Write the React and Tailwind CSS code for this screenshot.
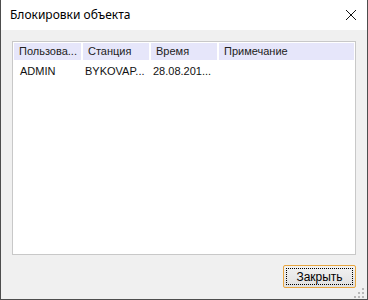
import React from 'react';

const columns = [
  { title: 'Пользова...', width: 'w-[67px]' },
  { title: 'Станция', width: 'w-[66px]' },
  { title: 'Время', width: 'w-[66px]' },
  { title: 'Примечание', width: 'flex-1' }
];

const rows = [
  ['ADMIN', 'BYKOVAP...', '28.08.201...', '']
];

function CloseIcon() {
  return (
    <svg width="12" height="12" viewBox="0 0 12 12" className="block">
      <path d="M1 1 L11 11 M11 1 L1 11" stroke="#111" strokeWidth="1" />
    </svg>
  );
}

function Grip() {
  const dots = [[8, 0], [4, 4], [8, 4], [0, 8], [4, 8], [8, 8]];
  return (
    <svg width="11" height="11" viewBox="0 0 11 11" className="block">
      {dots.map(([x, y]) => (
        <rect key={`${x}-${y}`} x={x} y={y} width="2" height="2" fill="#b8b8b8" />
      ))}
    </svg>
  );
}

export default function App() {
  return (
    <div
      className="w-[368px] h-[300px] flex flex-col bg-[#f0f0f0] border-x border-b border-[#4d4d4d] overflow-hidden"
      style={{ fontFamily: '"Liberation Sans", Arial, sans-serif' }}
    >
      {/* заголовок */}
      <div className="h-[30px] bg-white flex items-center justify-between pl-[9px] pr-[10px] shrink-0">
        <span className="text-[12px] text-black" style={{ fontFamily: '"Noto Sans", "Liberation Sans", sans-serif' }}>
          Блокировки объекта
        </span>
        <CloseIcon />
      </div>

      <div className="flex-1 flex flex-col px-[11px] pt-[11px]">
        {/* список */}
        <div className="h-[214px] border border-[#c8c8c8] bg-white p-px flex flex-col">
          <div className="flex h-[17px] bg-white gap-[2px] shrink-0">
            {columns.map(col => (
              <div key={col.title} className={`${col.width} h-full bg-[#e6e6fa] flex items-center pl-[5px] text-[11px] text-[#222] whitespace-nowrap overflow-hidden`}>
                {col.title}
              </div>
            ))}
          </div>
          {rows.map((row, i) => (
            <div key={i} className="flex h-[17px] items-center mt-[3px] gap-[2px] text-[11px] text-[#111]">
              {row.map((cell, j) => (
                <div key={j} className={`${columns[j].width} ${j === 0 ? 'pl-[6px]' : 'pl-[2px]'} whitespace-nowrap overflow-hidden`}>
                  {cell}
                </div>
              ))}
            </div>
          ))}
        </div>

        {/* кнопки */}
        <div className="flex justify-end mt-[10px]">
          <button className="w-[73px] h-[23px] border border-[#e8a640] rounded-[2px] bg-gradient-to-b from-[#f2f2f2] to-[#e0e0e0] p-[2px]">
            <div className="w-full h-full border border-dotted border-black flex items-center justify-center text-[12px] text-black">
              Закрыть
            </div>
          </button>
        </div>

        <div className="flex-1 flex justify-end items-end pb-[2px] -mr-[9px]">
          <Grip />
        </div>
      </div>
    </div>
  );
}
